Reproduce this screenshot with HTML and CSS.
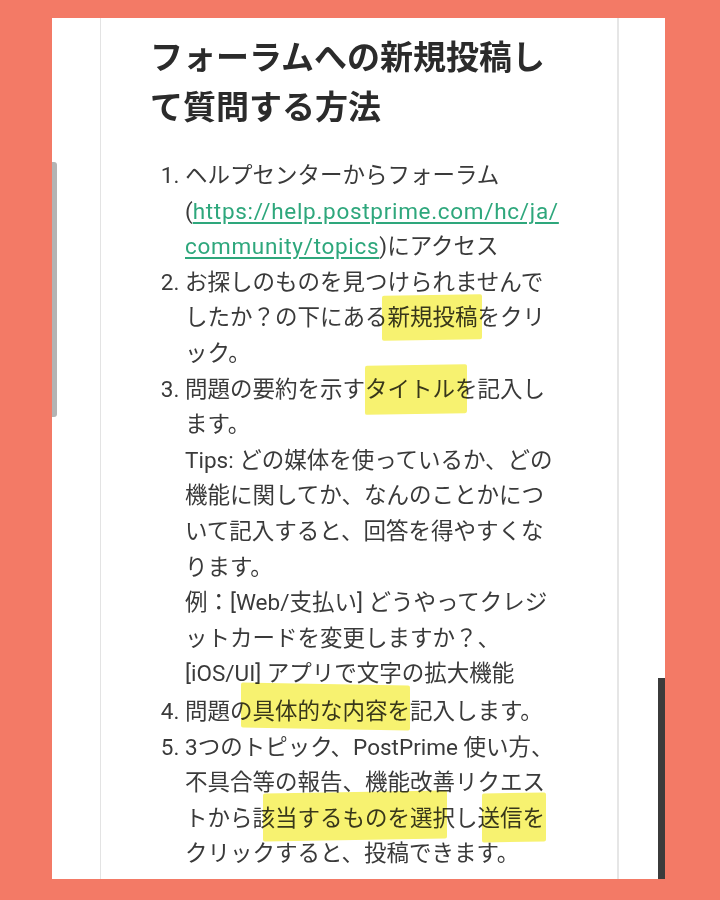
FILE: index.html
```html
<!DOCTYPE html><html lang="ja"><head>
	<meta charset="utf-8" />
	<meta name="viewport" content="width=device-width, initial-scale=1.0" />
	<title>フォーラムへの新規投稿して質問する方法</title>
	<link rel="stylesheet" href="styles.css">
</head><body>
	<div class="screen">
		<article class="page">
			<h1>フォーラムへの新規投稿して質問する方法</h1>
			<ol class="steps">
				<li>ヘルプセンターからフォーラム(<a href="#">https://help.postprime.com/hc/ja/<wbr>community/topics</a>)にアクセス</li>
				<li>お探しのものを見つけられませんでしたか？の下にある<span class="hl hl--post">新規投稿</span>をクリック。</li>
				<li>
					問題の要約を示す<span class="hl hl--title">タイトル</span>を記入します。
					<p>Tips: どの媒体を使っているか、どの機能に関してか、なんのことかについて記入すると、回答を得やすくなります。</p>
					<p>例：[Web/支払い] どうやってクレジットカードを変更しますか？、<br>[iOS/UI] アプリで文字の拡大機能</p>
				</li>
				<li>問題<span class="hl hl--detail">の具体的な内容を</span>記入します。</li>
				<li>3つのトピック、PostPrime 使い方、不具合等の報告、機能改善リクエストから<span class="hl hl--pick">該当するものを選択</span>し<span class="hl hl--send">送信を</span>クリックすると、投稿できます。</li>
			</ol>
		</article>
	</div>
</body></html>
```

FILE: styles.css
```css
body {
	margin: 0;
	padding: 18px 0 0 52px;
	background: #f37a66;
	font-family: Roboto, "Noto Sans CJK JP", sans-serif;
	color: #3a3a3a;
}
.screen {
	position: relative;
	width: 613px;
	height: 861px;
	background: #fff;
	padding-left: 48px;
	box-sizing: border-box;
}
/* side button shadow on the left, dark bezel on the right */
.screen::before {
	content: "";
	position: absolute;
	left: 0; top: 144px;
	width: 5px; height: 255px;
	background: #b3b3b3;
	border-radius: 0 3px 3px 0;
}
.screen::after {
	content: "";
	position: absolute;
	right: 0; bottom: 0;
	width: 7px; height: 201px;
	background: #3b3b3b;
}
.page {
	width: 519px;
	height: 100%;
	box-sizing: border-box;
	border-left: 1px solid #e3e3e3;
	border-right: 2px solid #e6e6e6;
	padding: 15px 0 0 49px;
}
h1 {
	margin: 0;
	width: 410px;
	font-size: 33px;
	line-height: 50px;
	font-weight: 700;
	color: #2b2b2b;
}
.steps {
	margin: 25px 0 0;
	padding: 0 0 0 35px;
	width: 373px;
	font-size: 22.5px;
	line-height: 35.6px;
}
.steps p {
	margin: 0;
}
.steps li:nth-child(4) {
	margin-top: 2px;
}
.steps a {
	color: #2ea77c;
	letter-spacing: 0.7px;
	text-decoration: underline;
	text-underline-offset: 3px;
}

/* marker-pen highlights */
.hl {
	position: relative;
}
.hl::before {
	content: "";
	position: absolute;
	left: -6px; right: -4px;
	top: -9px; bottom: -10px;
	background: #f7f270;
	mix-blend-mode: multiply;
	border-radius: 2px;
	transform: skewY(-1deg);
}
.hl--title::before {
	left: 0; right: -12px;
	top: -11px; bottom: -12px;
}
.hl--detail::before {
	left: 11px; right: 0;
	top: -14px; bottom: -5px;
	transform: skewY(1deg);
}
.hl--pick::before {
	left: 10px; right: 9px;
	top: -13px; bottom: -9px;
}
.hl--send::before {
	left: 4px; right: 0;
	top: -12px; bottom: -11px;
}
```
